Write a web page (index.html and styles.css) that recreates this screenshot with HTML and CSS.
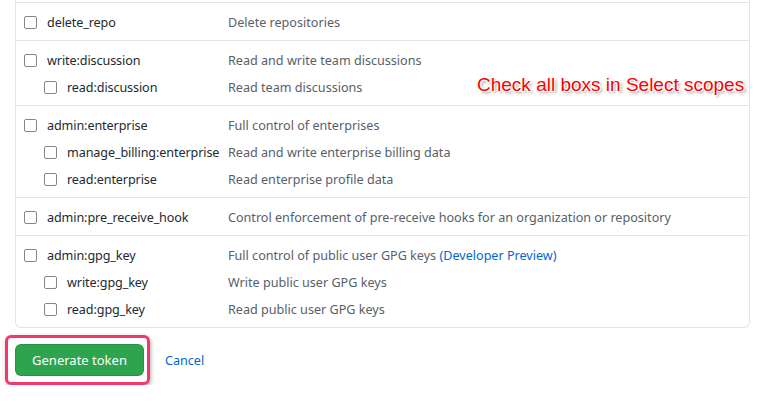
FILE: index.html
```html
<!DOCTYPE html>
<html>
<head>
<meta charset="utf-8">
<link rel="stylesheet" href="styles.css">
</head>
<body>
<div class="page">
  <div class="scopes">
    <div class="group">
      <div class="row"><span class="label"><span class="cb"></span><span class="name">delete_repo</span></span><span class="desc">Delete repositories</span></div>
    </div>
    <div class="group">
      <div class="row"><span class="label"><span class="cb"></span><span class="name">write:discussion</span></span><span class="desc">Read and write team discussions</span></div>
      <div class="row sub"><span class="label"><span class="cb"></span><span class="name">read:discussion</span></span><span class="desc">Read team discussions</span></div>
    </div>
    <div class="group">
      <div class="row"><span class="label"><span class="cb"></span><span class="name">admin:enterprise</span></span><span class="desc">Full control of enterprises</span></div>
      <div class="row sub"><span class="label"><span class="cb"></span><span class="name">manage_billing:enterprise</span></span><span class="desc">Read and write enterprise billing data</span></div>
      <div class="row sub"><span class="label"><span class="cb"></span><span class="name">read:enterprise</span></span><span class="desc">Read enterprise profile data</span></div>
    </div>
    <div class="group">
      <div class="row"><span class="label"><span class="cb"></span><span class="name">admin:pre_receive_hook</span></span><span class="desc">Control enforcement of pre-receive hooks for an organization or repository</span></div>
    </div>
    <div class="group">
      <div class="row"><span class="label"><span class="cb"></span><span class="name">admin:gpg_key</span></span><span class="desc">Full control of public user GPG keys <a class="link">(Developer Preview)</a></span></div>
      <div class="row sub"><span class="label"><span class="cb"></span><span class="name">write:gpg_key</span></span><span class="desc">Write public user GPG keys</span></div>
      <div class="row sub"><span class="label"><span class="cb"></span><span class="name">read:gpg_key</span></span><span class="desc">Read public user GPG keys</span></div>
    </div>
    <div class="note">Check all boxs in Select scopes</div>
  </div>
  <div class="actions">
    <div class="highlight"><button class="btn">Generate token</button></div>
    <a class="cancel">Cancel</a>
  </div>
</div>
</body>
</html>
```
FILE: styles.css
```css
* { box-sizing: border-box; }
body {
  margin: 0;
  background: #fff;
  font-family: "Noto Sans", "Open Sans", sans-serif;
  font-size: 12.6px;
  color: #24292e;
}
.page { padding-left: 15px; width: 750px; }
.scopes {
  position: relative;
  border: 1px solid #e1e4e8;
  border-top: none;
  border-radius: 0 0 6px 6px;
  padding-top: 2px;
}
.group {
  border-top: 1px solid #e1e4e8;
  padding: 6px 0 4px;
}
.row {
  display: flex;
  align-items: center;
  height: 27px;
  padding-left: 8px;
}
.label {
  display: flex;
  align-items: center;
  width: 204px;
  flex: none;
}
.row.sub .label { padding-left: 20px; }
.cb {
  width: 13px;
  height: 13px;
  border: 1.5px solid #85858e;
  border-radius: 2px;
  margin-right: 10px;
  flex: none;
}
.name { color: #24292e; white-space: nowrap; letter-spacing: -0.1px; }
.desc { color: #586069; white-space: nowrap; }
.link { color: #0366d6; }
.note {
  position: absolute;
  left: 461px;
  top: 74px;
  font-family: "Liberation Sans", Arial, sans-serif;
  font-size: 19px;
  color: #ff0000;
  text-shadow: 1px 1px 0 #fff, -1px -1px 0 #fff, 1px -1px 0 #fff, -1px 1px 0 #fff, 2px 2px 3px rgba(0,0,0,0.45);
  white-space: nowrap;
}
.actions {
  display: flex;
  align-items: center;
  margin-top: 7px;
  margin-left: -10px;
}
.highlight {
  border: 3px solid #f0386b;
  border-radius: 6px;
  padding: 6px 3px 6px 7px;
  box-shadow: 1px 2px 4px rgba(0,0,0,0.3);
}
.btn {
  display: block;
  width: 129px;
  height: 32px;
  background: #2ea44f;
  color: #fff;
  border: 1px solid rgba(27,31,35,0.15);
  border-radius: 6px;
  font-family: "Noto Sans", "Open Sans", sans-serif;
  font-size: 13px;
  padding: 0;
}
.cancel {
  color: #0366d6;
  margin-left: 15px;
}
```
